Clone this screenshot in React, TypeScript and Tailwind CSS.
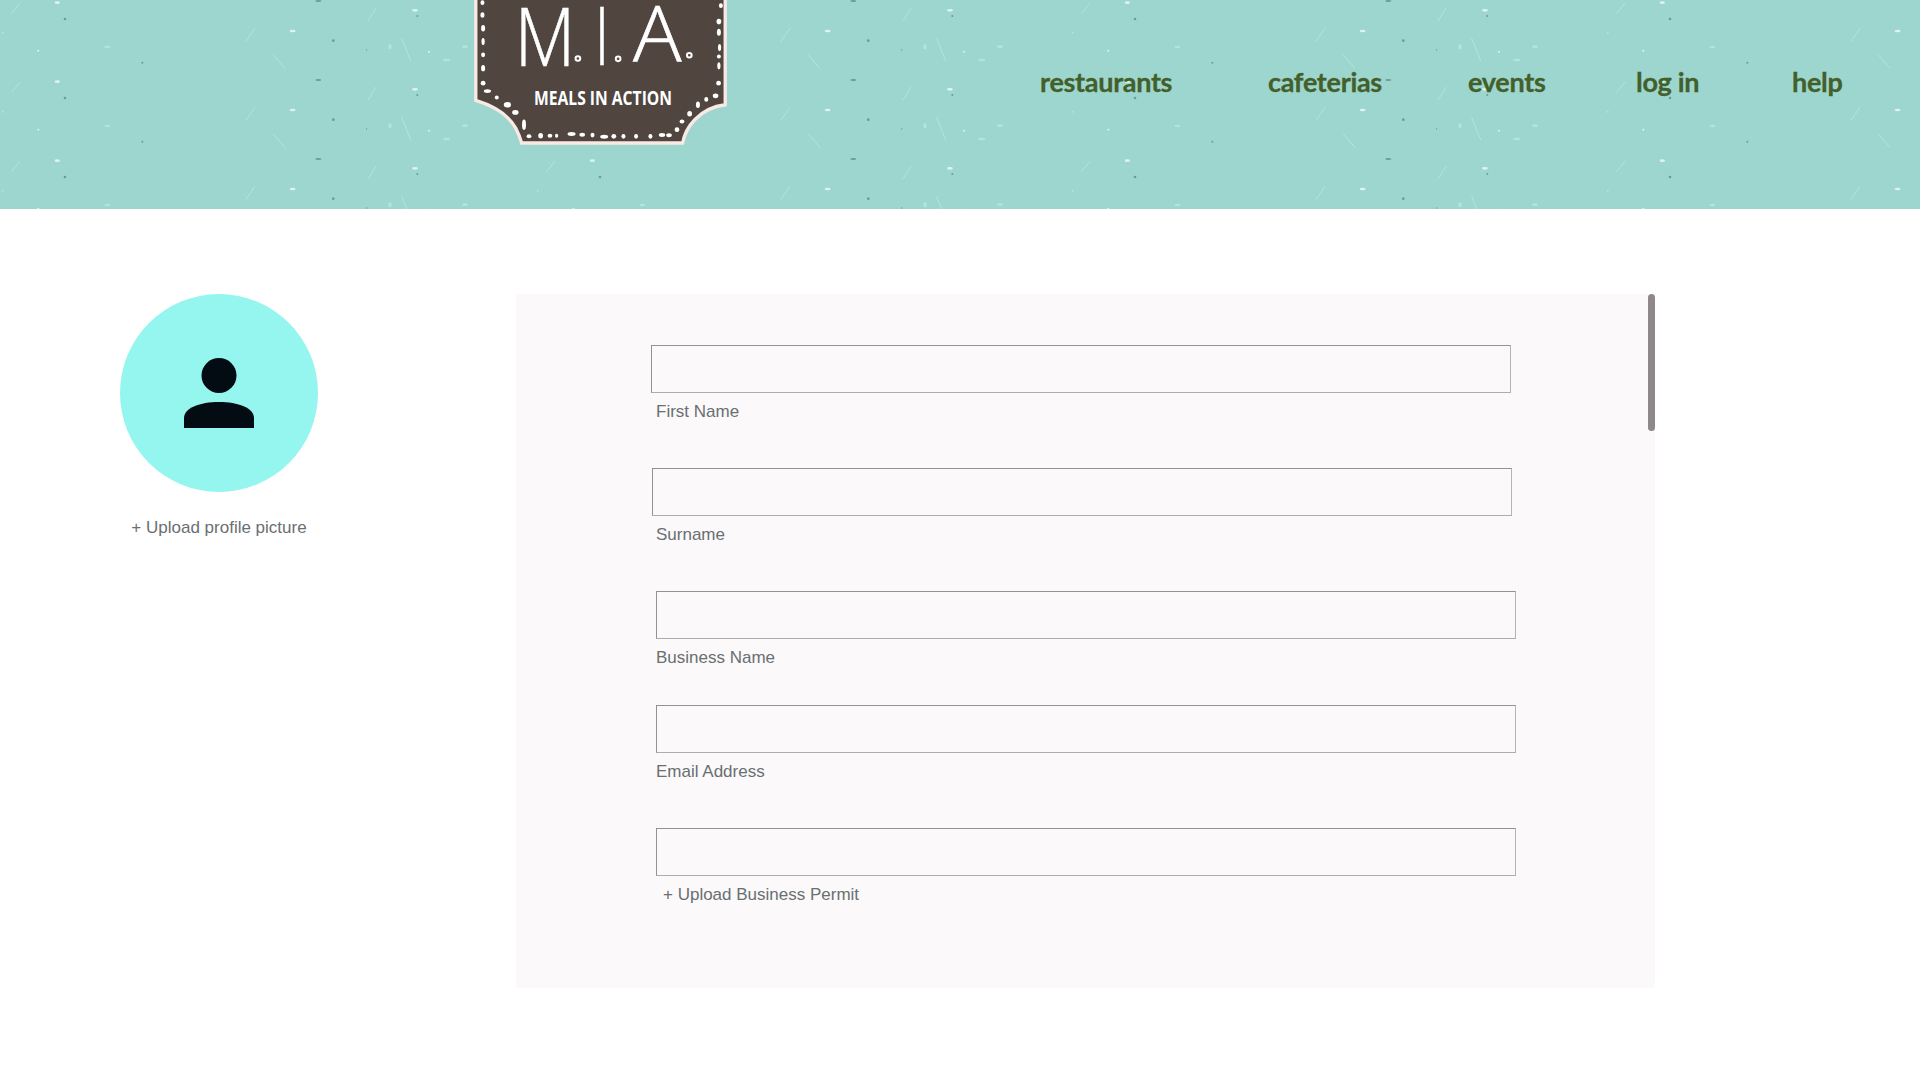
const dots: [number, number, number, number][] = [
  [125, 8, 5, 6], [125, 45, 5, 7], [127, 85, 5, 8], [127, 125, 4, 9], [127, 165, 5, 6], [127, 205, 5, 8],
  [127, 250, 6, 6], [140, 274, 9, 5], [168, 293, 5, 5], [200, 315, 9, 7], [224, 338, 8, 6], [250, 375, 5, 13],
  [265, 410, 6, 5], [300, 408, 6, 7], [328, 408, 6, 5], [348, 408, 4, 5], [393, 403, 10, 5], [425, 405, 7, 5],
  [456, 406, 5, 6], [491, 411, 10, 5], [520, 410, 6, 6], [549, 410, 5, 6], [587, 410, 5, 6], [630, 410, 5, 6],
  [665, 406, 8, 5], [686, 407, 7, 5], [710, 390, 6, 6], [725, 365, 6, 5], [748, 342, 6, 7], [773, 315, 5, 8],
  [798, 299, 5, 6], [826, 288, 7, 6], [835, 250, 6, 6], [836, 198, 4, 9], [836, 170, 5, 5], [838, 143, 4, 9],
  [836, 97, 5, 9], [836, 65, 6, 7], [842, 17, 5, 6],
];

function Logo() {
  return (
    <svg viewBox="97 0 766 436" className="w-[255px] h-[145px] shrink-0 block">
      <path
        d="M105 -5 V302 C150 316 200 340 225 385 C235 405 240 420 243 430 H727 C735 385 775 325 855 315 V-5 Z"
        fill="#50453f"
        stroke="#f9e9e5"
        strokeWidth="10"
      />
      {dots.map(([x, y, rx, ry], i) => (
        <ellipse key={i} cx={x} cy={y} rx={rx * 1.2} ry={ry * 1.2} fill="#ffffff" />
      ))}
      <g fill="#ffffff" fontFamily="'Open Sans', sans-serif" fontWeight="300" stroke="#ffffff" strokeWidth="2">
        <text x="222" y="198" fontSize="245" textLength="182" lengthAdjust="spacingAndGlyphs">M</text>
        <text x="462" y="196" fontSize="245" textLength="45" lengthAdjust="spacingAndGlyphs">I</text>
        <text x="578" y="186" fontSize="235" textLength="146" lengthAdjust="spacingAndGlyphs">A</text>
      </g>
      <g fill="none" stroke="#ffffff" strokeWidth="6">
        <circle cx="412" cy="176" r="7" />
        <circle cx="533" cy="177" r="7" />
        <circle cx="747" cy="166" r="7" />
      </g>
      <text
        x="280"
        y="317"
        fontSize="60"
        fontWeight="700"
        fill="#ffffff"
        fontFamily="'Open Sans', sans-serif"
        textLength="415"
        lengthAdjust="spacingAndGlyphs"
      >
        MEALS IN ACTION
      </text>
    </svg>
  );
}

// paper flecks, repeated over the header
function Texture() {
  return (
    <svg className="absolute inset-0 w-full h-full blur-[0.7px]">
      <defs>
        <pattern id="paper" width="535" height="79" patternUnits="userSpaceOnUse">
          <g transform="scale(0.3333)" strokeLinecap="round">
            <g stroke="#b4e3dc" strokeWidth="3" fill="none">
              <path d="M35 40 L60 10" />
              <path d="M738 124 L765 85" />
              <path d="M1105 62 L1128 25" />
              <path d="M1205 115 L1232 182" />
              <path d="M820 165 L855 205" />
            </g>
            <g fill="#dcf3ef">
              <ellipse cx="878" cy="93" rx="9" ry="4" />
              <ellipse cx="1245" cy="31" rx="9" ry="4" />
              <ellipse cx="172" cy="8" rx="8" ry="4" />
              <circle cx="115" cy="152" r="3" />
              <circle cx="1287" cy="155" r="3" />
            </g>
            <g fill="#b4e3dc">
              <ellipse cx="322" cy="141" rx="9" ry="4" />
              <ellipse cx="1170" cy="140" rx="5" ry="8" />
              <ellipse cx="1395" cy="140" rx="9" ry="4" />
              <ellipse cx="1340" cy="180" rx="11" ry="4" />
              <circle cx="8" cy="98" r="3" />
            </g>
            <g fill="#6f9a94">
              <circle cx="195" cy="57" r="4" />
              <circle cx="427" cy="188" r="3" />
              <ellipse cx="955" cy="3" rx="9" ry="3" />
              <circle cx="1000" cy="122" r="4" />
              <circle cx="1252" cy="48" r="3" />
              <circle cx="1100" cy="150" r="2" />
            </g>
          </g>
        </pattern>
      </defs>
      <rect width="100%" height="100%" fill="url(#paper)" />
    </svg>
  );
}

const navClass =
  "font-['Lato',sans-serif] font-bold text-[27px] tracking-[-0.3px] [-webkit-text-stroke:0.3px_#43602a] leading-none text-[#43602a] block";

const labelClass = "mt-[9px] text-[17px] leading-[20px] text-[#696f72]";
const boxClass = "h-[48px] w-[860px] border border-[#929292] border-r-[#b4b4b4] border-b-[#adadad]";

function Field({ label, offset, gap }: { label: string; offset: string; gap: string }) {
  return (
    <div className={gap}>
      <div className={boxClass + " " + offset} />
      <div className={labelClass + " pl-[140px]"}>{label}</div>
    </div>
  );
}

export default function App() {
  return (
    <div className="min-h-[1080px] bg-white font-['Liberation_Sans',Arial,sans-serif]">
      <header className="relative h-[209px] bg-[#9dd6cf] overflow-hidden flex items-start pl-[473px]">
        <Texture />
        <div className="relative">
          <Logo />
        </div>
        <nav className="relative flex items-baseline mt-[68px] ml-[312px]">
          <a className={navClass + " w-[228px]"}>restaurants</a>
          <a className={navClass + " w-[200px]"}>cafeterias</a>
          <a className={navClass + " w-[168px]"}>events</a>
          <a className={navClass + " w-[156px]"}>log in</a>
          <a className={navClass}>help</a>
        </nav>
      </header>

      <main className="flex items-start pt-[85px] pl-[120px]">
        <div className="w-[396px] shrink-0">
          <div className="w-[198px] h-[198px] rounded-full bg-[#95f5ef] flex items-center justify-center">
            <svg width="70" height="71" viewBox="0 0 70 71" className="block">
              <circle cx="35" cy="17.5" r="17.5" fill="#040c13" />
              <path d="M0 70 V60 C0 50 16 44 35 44 C54 44 70 50 70 60 V70 Z" fill="#040c13" />
            </svg>
          </div>
          <div className="w-[198px] mt-[26px] text-center text-[17px] leading-[20px] text-[#696f72] whitespace-nowrap">
            + Upload profile picture
          </div>
        </div>

        <section className="relative w-[1139px] h-[694px] bg-[#fbf9fa] pt-[51px]">
          <div className="absolute right-0 top-0 w-[7px] h-[137px] rounded-full bg-[#8f8888]" />
          <Field label="First Name" offset="ml-[135px]" gap="h-[123px]" />
          <Field label="Surname" offset="ml-[136px]" gap="h-[123px]" />
          <Field label="Business Name" offset="ml-[140px]" gap="h-[114px]" />
          <Field label="Email Address" offset="ml-[140px]" gap="h-[123px]" />
          <div>
            <div className={boxClass + " ml-[140px]"} />
            <div className={labelClass + " pl-[147px]"}>+ Upload Business Permit</div>
          </div>
        </section>
      </main>
    </div>
  );
}
